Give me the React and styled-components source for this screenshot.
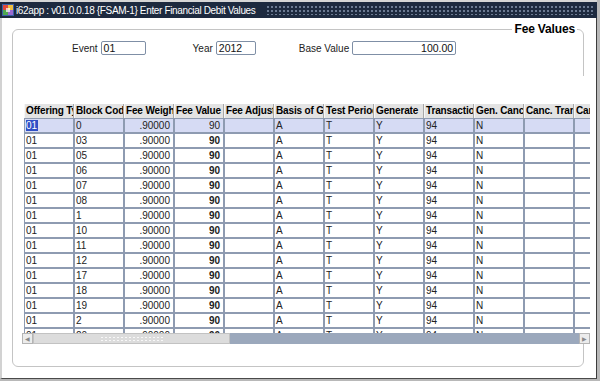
import React from "react";
import styled, { createGlobalStyle } from "styled-components";

const GlobalStyle = createGlobalStyle`
  html, body {
    margin: 0;
    padding: 0;
    background: #b8b8b8;
  }
  body {
    font-family: "Liberation Sans", Arial, sans-serif;
    font-size: 10px;
    color: #000;
  }
`;

const Frame = styled.div`
  width: 597px;
  height: 379px;
  display: flex;
  flex-direction: column;
  border-top: 2px solid #d6d6d6;
  box-sizing: border-box;
`;

const TitleBar = styled.div`
  height: 16px;
  display: flex;
  align-items: center;
  background: #1d2a3f;
  color: #fff;
  font-size: 10px;
  letter-spacing: -0.35px;
  white-space: nowrap;
  padding-left: 2px;
`;

const AppIcon = styled.svg`
  width: 12px;
  height: 12px;
  margin-right: 2px;
  flex: none;
`;

const Dots = styled.div`
  flex: 1;
  height: 10px;
  margin: 0 4px 0 10px;
  background-image: radial-gradient(circle, #6b7a92 0.8px, transparent 1px);
  background-size: 4px 4px;
`;

const Body = styled.div`
  flex: 1;
  background: #fff;
  border-left: 2px solid #d2d2d2;
  border-right: 1px solid #3c3c3c;
  border-bottom: 1px solid #4a4a4a;
  padding-top: 4px;
  display: flex;
  flex-direction: column;
`;

const Panel = styled.fieldset`
  margin: 0 12px 0 10px;
  padding: 5px 0 22px 9px;
  border: 1px solid #c4c4c4;
  border-radius: 6px;
  min-width: 0;
`;

const Legend = styled.legend`
  margin-left: auto;
  margin-right: 6px;
  padding: 0 2px;
  font-size: 12px;
  font-weight: 700;
  line-height: 14px;
  letter-spacing: -0.15px;
`;

const FormRow = styled.div`
  display: flex;
  align-items: center;
  height: 14px;
  padding-left: 50px;
`;

const Field = styled.label`
  display: flex;
  align-items: center;
  gap: 3px;
  margin-right: ${(p) => p.$space}px;
  font-size: 10px;
  color: #222;
`;

const Input = styled.div`
  box-sizing: border-box;
  width: ${(p) => p.$w}px;
  height: 14px;
  border: 1px solid #7f8fa6;
  border-radius: 2px;
  padding: 0 2px;
  line-height: 12px;
  font-size: 10.5px;
  text-align: ${(p) => (p.$right ? "right" : "left")};
  color: #111;
`;

const TableBlock = styled.div`
  position: relative;
  margin: 21px -7px 0 0;
  padding-top: 28px;
  background: #fff;
  width: 568px;
`;

const Viewport = styled.div`
  height: 229px;
  overflow: hidden;
  padding-left: 2px;
`;

const HeadRow = styled.div`
  display: flex;
  height: 14px;
  background: #e3e3e3;
`;

const HeadCell = styled.div`
  box-sizing: border-box;
  flex: none;
  width: 50px;
  padding: 0 1px;
  border-left: 1px solid #f6f6f6;
  border-right: 1px solid #a8a8a8;
  font-weight: 700;
  line-height: 14px;
  letter-spacing: -0.15px;
  white-space: nowrap;
  overflow: hidden;
`;

const Row = styled.div`
  display: flex;
  height: 15px;
`;

const Cell = styled.div`
  box-sizing: border-box;
  flex: none;
  width: 50px;
  height: 15px;
  padding: 0 3px 0 1px;
  border: 1px solid #8e9bb1;
  background: ${(p) => (p.$selected ? "#d6dbf4" : "#fff")};
  line-height: 13px;
  text-align: ${(p) => (p.$right ? "right" : "left")};
  font-weight: ${(p) => (p.$bold ? 700 : 400)};
  white-space: nowrap;
  overflow: hidden;
  color: #222;
`;

const Highlight = styled.span`
  background: #2f4fc6;
  color: #fff;
  padding-right: 1px;
`;

const ScrollBar = styled.div`
  display: flex;
  height: 11px;
`;

const ArrowButton = styled.div`
  box-sizing: border-box;
  width: 11px;
  flex: none;
  background: #ececec;
  border: 1px solid #b4b4b4;
  display: flex;
  align-items: center;
  justify-content: center;
  font-size: 6px;
  color: #8a8a8a;
`;

const Thumb = styled.div`
  box-sizing: border-box;
  width: 197px;
  flex: none;
  background: #dcdcdc;
  border: 1px solid #c2c2c2;
  display: flex;
  align-items: center;
  justify-content: center;
`;

const Grip = styled.div`
  width: 64px;
  height: 5px;
  background-image: radial-gradient(circle, #f8f8f8 0.8px, transparent 1px);
  background-size: 4px 3px;
`;

const Track = styled.div`
  flex: 1;
  background: #9ba8bc;
`;

const columns = [
  "Offering Type",
  "Block Code",
  "Fee Weight",
  "Fee Value",
  "Fee Adjustment",
  "Basis of Generation",
  "Test Period",
  "Generate",
  "Transaction",
  "Gen. Cancel",
  "Canc. Transaction",
  "Cancel",
];

const blocks = ["0", "03", "05", "06", "07", "08", "1", "10", "11", "12", "17", "18", "19", "2", "20"];

const App = () => {
  return (
    <>
      <GlobalStyle />
      <Frame>
        <TitleBar>
          <AppIcon viewBox="0 0 12 12">
            <rect x="0" y="0" width="12" height="12" fill="#3a5ea8" />
            <rect x="1" y="1" width="5" height="5" fill="#e04a3a" />
            <rect x="6" y="1" width="5" height="5" fill="#f0c040" />
            <rect x="1" y="6" width="5" height="5" fill="#50a850" />
            <rect x="6" y="6" width="5" height="5" fill="#9a6ad0" />
            <rect x="4" y="4" width="4" height="4" fill="#fff" opacity="0.7" />
          </AppIcon>
          i62app : v01.0.0.18 {"{FSAM-1}"} Enter Financial Debit Values
          <Dots />
        </TitleBar>
        <Body>
          <Panel>
            <Legend>Fee Values</Legend>
            <FormRow>
              <Field $space={47}>
                Event <Input $w={45}>01</Input>
              </Field>
              <Field $space={43}>
                Year <Input $w={40}>2012</Input>
              </Field>
              <Field $space={0}>
                Base Value <Input $w={104} $right>100.00</Input>
              </Field>
            </FormRow>
            <TableBlock>
              <Viewport>
                <HeadRow>
                  {columns.map((c) => (
                    <HeadCell key={c}>{c}</HeadCell>
                  ))}
                </HeadRow>
                {blocks.map((b, i) => {
                  const sel = i === 0;
                  return (
                    <Row key={b}>
                      <Cell $selected={sel}>{sel ? <Highlight>01</Highlight> : "01"}</Cell>
                      <Cell $selected={sel}>{b}</Cell>
                      <Cell $selected={sel} $right>.90000</Cell>
                      <Cell $selected={sel} $right $bold={!sel}>90</Cell>
                      <Cell $selected={sel} />
                      <Cell $selected={sel}>A</Cell>
                      <Cell $selected={sel}>T</Cell>
                      <Cell $selected={sel}>Y</Cell>
                      <Cell $selected={sel}>94</Cell>
                      <Cell $selected={sel}>N</Cell>
                      <Cell $selected={sel} />
                      <Cell $selected={sel} />
                    </Row>
                  );
                })}
              </Viewport>
              <ScrollBar>
                <ArrowButton>◀</ArrowButton>
                <Thumb>
                  <Grip />
                </Thumb>
                <Track />
                <ArrowButton>▶</ArrowButton>
              </ScrollBar>
            </TableBlock>
          </Panel>
        </Body>
      </Frame>
    </>
  );
};

export default App;
